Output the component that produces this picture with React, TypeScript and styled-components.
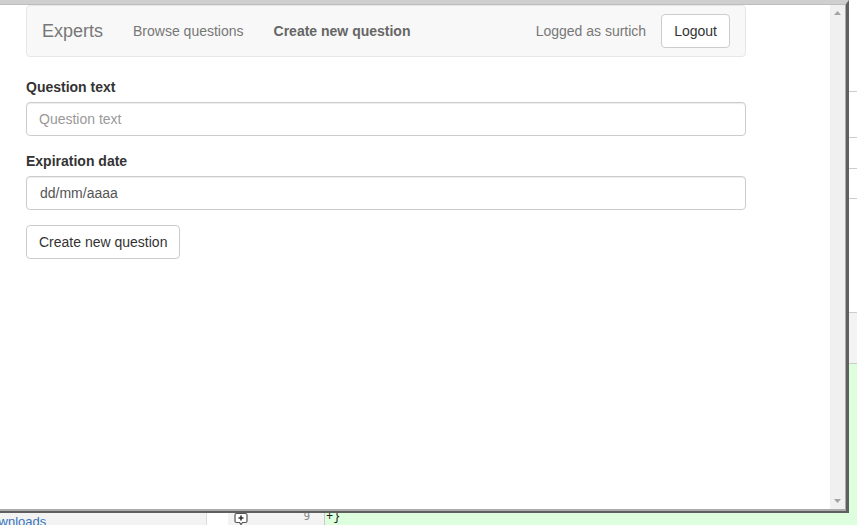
import React from "react";
import styled, { createGlobalStyle } from "styled-components";

const GlobalStyle = createGlobalStyle`
  *, *::before, *::after { box-sizing: border-box; }
  html, body { margin: 0; padding: 0; }
  body {
    font-family: "Liberation Sans", Arial, Helvetica, sans-serif;
    font-size: 14px;
    line-height: 20px;
    color: #333;
    background: #fff;
  }
`;

/* ---------- background page (code review behind the popup) ---------- */

const Desktop = styled.div`
  position: relative;
  width: 857px;
  height: 525px;
  overflow: hidden;
  display: flex;
  background: #fff;
`;

const Sidebar = styled.aside`
  width: 206px;
  flex: none;
  background: #f3f3f3;
  display: flex;
  flex-direction: column;
  justify-content: flex-end;
`;

const SidebarLink = styled.a`
  display: block;
  color: #3a74bb;
  font-size: 13px;
  line-height: 18px;
  text-indent: -18px;
  margin-bottom: -6px;
  white-space: nowrap;
  text-decoration: none;
`;

const DiffPane = styled.section`
  flex: 1;
  display: flex;
  flex-direction: column;
  border-left: 1px solid #dcdcdc;
`;

type Tone = "plain" | "hunk" | "added";
const toneBg: Record<Tone, string> = {
  plain: "#ffffff",
  hunk: "#f3f3f3",
  added: "#ddffdd",
};

const DiffRow = styled.div<{ $h?: number; $line?: boolean; $grow?: boolean }>`
  display: grid;
  grid-template-columns: 21px 97px 1fr;
  flex: ${(p) => (p.$grow ? "1" : "none")};
  height: ${(p) => (p.$h ? `${p.$h}px` : "auto")};
  border-top: ${(p) => (p.$line ? "1px solid #cccccc" : "none")};
`;

const ActionCell = styled.div`
  background: #fff;
`;

const Gutter = styled.div`
  background: #f3f3f3;
  border-right: 1px solid #c8c8c8;
  display: flex;
  align-items: flex-start;
  justify-content: space-between;
  padding: 0 14px 0 6px;
  font-family: "DejaVu Sans Mono", "Liberation Mono", monospace;
  font-size: 11px;
  line-height: 18px;
  color: #888;
`;

const CommentIcon = styled.svg`
  margin-top: 4px;
  flex: none;
`;

const CodeCell = styled.div<{ $tone: Tone }>`
  background: ${(p) => toneBg[p.$tone]};
  font-family: "Liberation Mono", "DejaVu Sans Mono", monospace;
  font-size: 12px;
  line-height: 18px;
  color: #222;
  padding-left: 1px;
  white-space: pre;
`;

/* ---------- popup window ---------- */

const Window = styled.div`
  position: absolute;
  top: 0;
  left: 0;
  right: 8px;
  bottom: 12px;
  display: flex;
  flex-direction: column;
  border-top: 4px solid #cfcfcf;
  border-right: 3px solid #5f5f5f;
  border-bottom: 2px solid #5f5f5f;
`;

const WindowInner = styled.div`
  flex: 1;
  min-height: 0;
  display: flex;
  border-top: 1px solid #bdbdbd;
  border-right: 1px solid #ababab;
  border-bottom: 2px solid #ababab;
`;

const PageArea = styled.main`
  flex: 1;
  min-width: 0;
  overflow: hidden;
  background: #fff;
`;

const Scrollbar = styled.div`
  width: 15px;
  flex: none;
  background: #f0f0f0;
  display: flex;
  flex-direction: column;
  justify-content: space-between;
  align-items: center;
  padding: 6px 0;
`;

const Container = styled.div`
  margin-left: 26px;
  width: 720px;
`;

const Navbar = styled.nav`
  display: flex;
  align-items: center;
  min-height: 50px;
  margin-bottom: 20px;
  background: #f8f8f8;
  border: 1px solid #e7e7e7;
  border-radius: 4px;
`;

const Brand = styled.a`
  padding: 15px;
  font-size: 18px;
  line-height: 20px;
  color: #777;
  text-decoration: none;
`;

const NavLink = styled.a<{ $active?: boolean }>`
  padding: 15px;
  line-height: 20px;
  color: ${(p) => (p.$active ? "#666" : "#777")};
  font-weight: ${(p) => (p.$active ? 700 : 400)};
  text-decoration: none;
`;

const NavRight = styled.div`
  margin-left: auto;
  display: flex;
  align-items: center;
  padding-right: 15px;
`;

const NavText = styled.span`
  color: #777;
  margin-right: 15px;
  line-height: 20px;
`;

const Button = styled.button`
  display: inline-block;
  padding: 6px 12px;
  font-family: inherit;
  font-size: 14px;
  line-height: 20px;
  color: #333;
  background: #fff;
  border: 1px solid #ccc;
  border-radius: 4px;
  cursor: pointer;
`;

const FormGroup = styled.div`
  margin-bottom: 15px;
`;

const Label = styled.label`
  display: block;
  font-weight: 700;
  line-height: 20px;
  margin-bottom: 5px;
`;

const Input = styled.input<{ $date?: boolean }>`
  display: block;
  width: 100%;
  height: 34px;
  padding: 6px 12px 6px ${(p) => (p.$date ? "13px" : "12px")};
  font-family: inherit;
  font-size: 14px;
  line-height: 20px;
  color: #555;
  background: #fff;
  border: 1px solid #ccc;
  border-radius: 4px;
  box-shadow: inset 0 1px 1px rgba(0, 0, 0, 0.075);
  outline: none;
  &::placeholder { color: #999; }
`;

const Arrow = ({ down }: { down?: boolean }) => (
  <svg width="7" height="4" viewBox="0 0 7 4">
    <polygon
      points={down ? "0,0 7,0 3.5,4" : "3.5,0 7,4 0,4"}
      fill="#a3a3a3"
    />
  </svg>
);

export default function App() {
  return (
    <>
      <GlobalStyle />
      <Desktop>
        <Sidebar>
          <SidebarLink href="#">Downloads</SidebarLink>
        </Sidebar>
        <DiffPane>
          <DiffRow $h={91}>
            <ActionCell />
            <Gutter />
            <CodeCell $tone="plain" />
          </DiffRow>
          <DiffRow $h={46} $line>
            <ActionCell />
            <Gutter />
            <CodeCell $tone="plain" />
          </DiffRow>
          <DiffRow $h={31} $line>
            <ActionCell />
            <Gutter />
            <CodeCell $tone="plain" />
          </DiffRow>
          <DiffRow $h={30} $line>
            <ActionCell />
            <Gutter />
            <CodeCell $tone="plain" />
          </DiffRow>
          <DiffRow $h={114} $line>
            <ActionCell />
            <Gutter />
            <CodeCell $tone="plain" />
          </DiffRow>
          <DiffRow $h={51} $line>
            <ActionCell />
            <Gutter />
            <CodeCell $tone="hunk" />
          </DiffRow>
          <DiffRow $h={145} $line>
            <ActionCell />
            <Gutter />
            <CodeCell $tone="added" />
          </DiffRow>
          <DiffRow $grow>
            <ActionCell />
            <Gutter>
              <CommentIcon width="14" height="14" viewBox="0 0 14 14">
                <path
                  d="M2.5 1.5h9a1.5 1.5 0 0 1 1.5 1.5v6a1.5 1.5 0 0 1-1.5 1.5H8.5L7 12.5 5.5 10.5h-3A1.5 1.5 0 0 1 1 9V3a1.5 1.5 0 0 1 1.5-1.5z"
                  fill="#fff"
                  stroke="#555"
                  strokeWidth="1.2"
                />
                <path d="M7 3.5v5M4.5 6h5" stroke="#333" strokeWidth="1.6" />
              </CommentIcon>
              <span>9</span>
            </Gutter>
            <CodeCell $tone="added">+{"}"}</CodeCell>
          </DiffRow>
        </DiffPane>

        <Window>
          <WindowInner>
            <PageArea>
              <Container>
                <Navbar>
                  <Brand href="#">Experts</Brand>
                  <NavLink href="#">Browse questions</NavLink>
                  <NavLink href="#" $active>
                    Create new question
                  </NavLink>
                  <NavRight>
                    <NavText>Logged as surtich</NavText>
                    <Button type="button">Logout</Button>
                  </NavRight>
                </Navbar>
                <form onSubmit={(e) => e.preventDefault()}>
                  <FormGroup>
                    <Label htmlFor="qtext">Question text</Label>
                    <Input id="qtext" type="text" placeholder="Question text" />
                  </FormGroup>
                  <FormGroup>
                    <Label htmlFor="qdate">Expiration date</Label>
                    <Input
                      id="qdate"
                      type="text"
                      $date
                      readOnly
                      defaultValue="dd/mm/aaaa"
                    />
                  </FormGroup>
                  <Button type="submit">Create new question</Button>
                </form>
              </Container>
            </PageArea>
            <Scrollbar>
              <Arrow />
              <Arrow down />
            </Scrollbar>
          </WindowInner>
        </Window>
      </Desktop>
    </>
  );
}
